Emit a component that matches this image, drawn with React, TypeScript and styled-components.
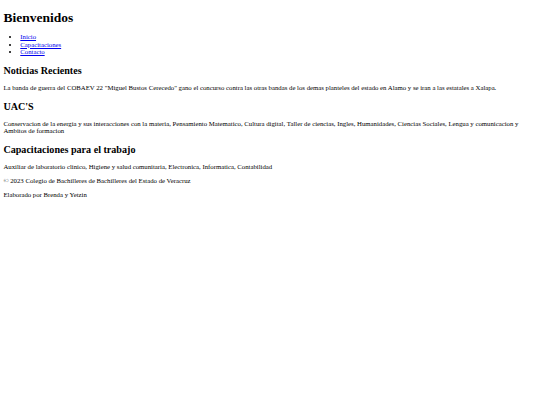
import React from "react";
import styled, { createGlobalStyle } from "styled-components";

const Global = createGlobalStyle`
  html, body { background: #ffffff; }
  body {
    margin: 3.4px;
    font-family: "Liberation Serif", "Times New Roman", serif;
    font-size: 6.75px;
    color: #000000;
  }
`;

const Title = styled.h1`
  font-size: 13.5px;
  font-weight: bold;
  margin: 7px 0;
`;

const NavList = styled.ul`
  margin: 6.75px 0;
  padding-left: 16.9px;
  list-style: disc;
  line-height: 1.1;
`;

const NavItem = styled.li``;

const NavLink = styled.a`
  color: #0000ee;
  text-decoration: underline;
`;

const SectionTitle = styled.h2`
  font-size: 10.1px;
  font-weight: bold;
  margin: 9.4px 0 8.4px;
`;

const Text = styled.p`
  margin: 6.75px 0;
`;

const Footer = styled.footer``;

export default function App() {
  return (
    <>
      <Global />
      <header>
        <Title>Bienvenidos</Title>
        <nav>
          <NavList>
            <NavItem><NavLink href="#">Inicio</NavLink></NavItem>
            <NavItem><NavLink href="#">Capacitaciones</NavLink></NavItem>
            <NavItem><NavLink href="#">Contacto</NavLink></NavItem>
          </NavList>
        </nav>
      </header>
      <main>
        <section>
          <SectionTitle>Noticias Recientes</SectionTitle>
          <Text>
            La banda de guerra del COBAEV 22 "Miguel Bustos Cerecedo" gano el concurso contra las otras bandas de los demas planteles del estado en Alamo y se iran a las estatales a Xalapa.
          </Text>
        </section>
        <section>
          <SectionTitle>UAC'S</SectionTitle>
          <Text>
            Conservacion de la energia y sus interacciones con la materia, Pensamiento Matematico, Cultura digital, Taller de ciencias, Ingles, Humanidades, Ciencias Sociales, Lengua y comunicacion y Ambitos de formacion
          </Text>
        </section>
        <section>
          <SectionTitle>Capacitaciones para el trabajo</SectionTitle>
          <Text>
            Auxiliar de laboratorio clinico, Higiene y salud comunitaria, Electronica, Informatica, Contabilidad
          </Text>
        </section>
      </main>
      <Footer>
        <Text>© 2023 Colegio de Bachilleres de Bachilleres del Estado de Veracruz</Text>
        <Text>Elaborado por Brenda y Yetzin</Text>
      </Footer>
    </>
  );
}
